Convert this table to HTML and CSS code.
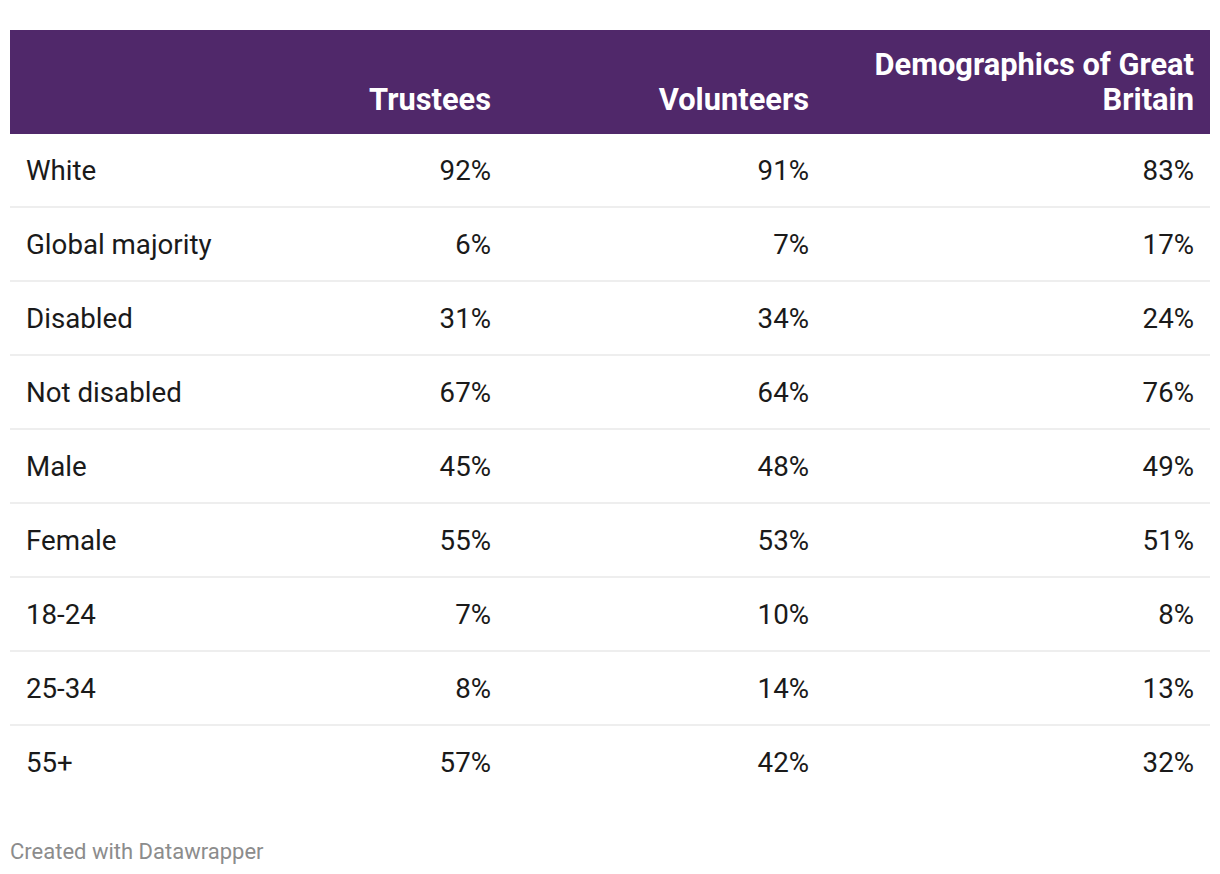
FILE: index.html
```html
<!DOCTYPE html>
<html>
<head>
<meta charset="utf-8">
<link rel="stylesheet" href="styles.css">
</head>
<body>
<div class="chart">
  <table class="dtable">
    <colgroup>
      <col class="c1"><col class="c2"><col class="c3"><col class="c4">
    </colgroup>
    <thead>
      <tr>
        <th class="lab"></th>
        <th>Trustees</th>
        <th>Volunteers</th>
        <th>Demographics of Great Britain</th>
      </tr>
    </thead>
    <tbody>
      <tr><td class="lab">White</td><td>92%</td><td>91%</td><td>83%</td></tr>
      <tr><td class="lab">Global majority</td><td>6%</td><td>7%</td><td>17%</td></tr>
      <tr><td class="lab">Disabled</td><td>31%</td><td>34%</td><td>24%</td></tr>
      <tr><td class="lab">Not disabled</td><td>67%</td><td>64%</td><td>76%</td></tr>
      <tr><td class="lab">Male</td><td>45%</td><td>48%</td><td>49%</td></tr>
      <tr><td class="lab">Female</td><td>55%</td><td>53%</td><td>51%</td></tr>
      <tr><td class="lab">18-24</td><td>7%</td><td>10%</td><td>8%</td></tr>
      <tr><td class="lab">25-34</td><td>8%</td><td>14%</td><td>13%</td></tr>
      <tr class="last"><td class="lab">55+</td><td>57%</td><td>42%</td><td>32%</td></tr>
    </tbody>
  </table>
  <div class="footer">Created with Datawrapper</div>
</div>
</body>
</html>
```
FILE: styles.css
```css
html, body {
  margin: 0;
  padding: 0;
  background: #ffffff;
}
body {
  font-family: Roboto, "Liberation Sans", sans-serif;
  color: #1a1a1a;
}
.chart {
  padding: 30px 10px 0 10px;
}
.dtable {
  width: 1200px;
  border-collapse: collapse;
  table-layout: fixed;
}
.c1 { width: 180px; }
.c2 { width: 317px; }
.c3 { width: 318px; }
.c4 { width: 385px; }
.dtable thead th {
  background: #50286a;
  color: #ffffff;
  font-weight: 700;
  font-size: 30.8px;
  line-height: 35px;
  text-align: right;
  vertical-align: bottom;
  padding: 16px 16px 17px 16px;
  height: 71px;
}
.dtable td {
  font-size: 27.7px;
  height: 72px;
  padding: 0 16px;
  text-align: right;
  vertical-align: middle;
  border-bottom: 2px solid #eeeeee;
  font-variant-numeric: tabular-nums;
}
.dtable td.lab {
  text-align: left;
  padding-left: 16px;
  white-space: nowrap;
}
.dtable tr.last td {
  border-bottom: none;
}
.footer {
  margin-top: 41px;
  font-size: 22px;
  color: #8c8c8c;
}
```
